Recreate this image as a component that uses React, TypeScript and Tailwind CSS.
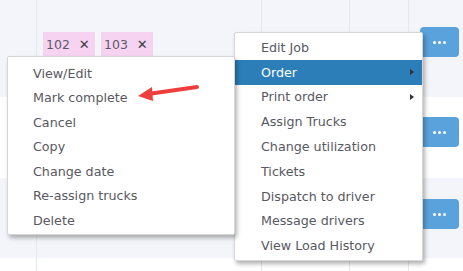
import React from 'react';

const leftItems = ['View/Edit', 'Mark complete', 'Cancel', 'Copy', 'Change date', 'Re-assign trucks', 'Delete'];

const rightItems: { label: string; active?: boolean; sub?: boolean }[] = [
  { label: 'Edit Job' },
  { label: 'Order', active: true, sub: true },
  { label: 'Print order', sub: true },
  { label: 'Assign Trucks' },
  { label: 'Change utilization' },
  { label: 'Tickets' },
  { label: 'Dispatch to driver' },
  { label: 'Message drivers' },
  { label: 'View Load History' },
];

const font = { fontFamily: '"DejaVu Sans", "Noto Sans", sans-serif' };

const Row = ({ light, height, children }: { light?: boolean; height: string; children?: React.ReactNode }) => (
  <div className={`grid grid-cols-[36px_225px_88px_59px_1fr] ${light ? 'bg-[#f3f5fa]' : 'bg-white'} ${height}`}>
    {children}
  </div>
);

const DotsButton = ({ top }: { top: string }) => (
  <div className={`ml-[11px] ${top} w-[39px] h-[30px] rounded-[4px] bg-[#5aa2dc] flex items-center justify-center gap-[2px]`}>
    <span className="w-[3px] h-[3px] rounded-full bg-white" />
    <span className="w-[3px] h-[3px] rounded-full bg-white" />
    <span className="w-[3px] h-[3px] rounded-full bg-white" />
  </div>
);

const Tag = ({ n }: { n: string }) => (
  <div className="h-[26px] w-[52px] bg-[#f7d3f2] flex items-center pl-[3px] gap-[9px] text-[12.5px] text-[#5a5a66]">
    <span>{n}</span>
    <span className="text-[13px] font-bold text-[#3c3c44]">✕</span>
  </div>
);

export default function App() {
  return (
    <div className="relative w-[463px] h-[271px] overflow-hidden bg-white" style={font}>
      <Row light height="h-[97px]">
        <div />
        <div className="border-l border-[#e4e7ee] pt-[32px] pl-[6px] flex gap-[6px]">
          <Tag n="102" />
          <Tag n="103" />
        </div>
        <div className="border-l border-[#e4e7ee]" />
        <div className="border-l border-[#e4e7ee]" />
        <div className="border-l border-[#e4e7ee]">
          <DotsButton top="mt-[27px]" />
        </div>
      </Row>
      <Row height="h-[81px]">
        <div />
        <div className="border-l border-[#e4e7ee]" />
        <div className="border-l border-[#e4e7ee]" />
        <div className="border-l border-[#e4e7ee]" />
        <div className="border-l border-[#e4e7ee]">
          <DotsButton top="mt-[20px]" />
        </div>
      </Row>
      <Row light height="h-[80px]">
        <div />
        <div className="border-l border-[#e4e7ee]" />
        <div className="border-l border-[#e4e7ee]" />
        <div className="border-l border-[#e4e7ee]" />
        <div className="border-l border-[#e4e7ee]">
          <DotsButton top="mt-[21px]" />
        </div>
      </Row>
      <Row height="h-[13px]">
        <div />
        <div className="border-l border-[#e4e7ee]" />
        <div className="border-l border-[#e4e7ee]" />
        <div className="border-l border-[#e4e7ee]" />
        <div className="border-l border-[#e4e7ee]" />
      </Row>

      {/* right dropdown */}
      <div className="absolute left-[234px] top-[32px] w-[189px] h-[229px] bg-white border border-[#d6d6d6] rounded-[2px] shadow-[2px_3px_4px_rgba(0,0,0,0.3)] pt-[2px]">
        {rightItems.map((it) => (
          <div
            key={it.label}
            className={`relative h-[24.8px] flex items-center pl-[26px] text-[12.7px] ${
              it.active ? 'bg-[#2b7eb8] text-white' : 'text-[#585862]'
            }`}
          >
            {it.label}
            {it.sub && (
              <span className="absolute right-[8px] top-[9px] w-0 h-0 border-y-[3.5px] border-y-transparent border-l-[4px] border-l-[#333]" />
            )}
          </div>
        ))}
      </div>

      {/* left dropdown */}
      <div className="absolute left-[7px] top-[56px] w-[228px] h-[179px] bg-white border border-[#d6d6d6] rounded-[2px] shadow-[2px_3px_4px_rgba(0,0,0,0.3)] pt-[4px]">
        {leftItems.map((l) => (
          <div key={l} className="h-[24.5px] flex items-center pl-[25px] text-[12.7px] text-[#585862]">
            {l}
          </div>
        ))}
      </div>

      {/* annotation arrow */}
      <svg className="absolute left-[134px] top-[80px]" width="70" height="24" viewBox="0 0 70 24">
        <line x1="63" y1="7" x2="14" y2="14" stroke="#ee3e3e" strokeWidth="4" strokeLinecap="round" />
        <polygon points="4,16 18,7 19,21" fill="#ee3e3e" />
      </svg>
    </div>
  );
}
